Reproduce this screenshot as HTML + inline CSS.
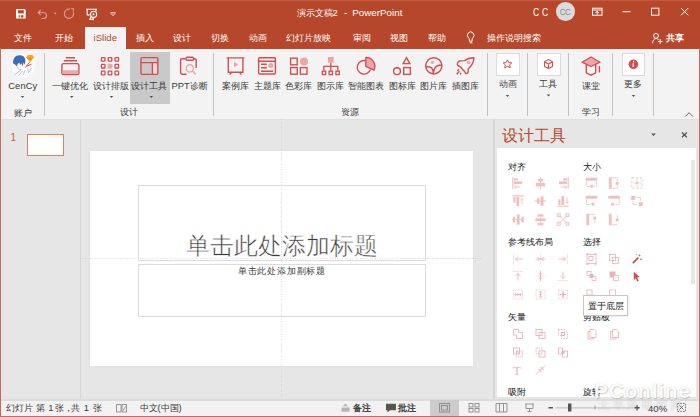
<!DOCTYPE html>
<html><head><meta charset="utf-8">
<style>
*{margin:0;padding:0;box-sizing:border-box}
html,body{width:700px;height:417px;overflow:hidden;background:#E6E6E6;font-family:"Liberation Sans",sans-serif;position:relative}
.a{position:absolute}
.t{position:absolute;white-space:nowrap;line-height:1}
.wt{color:#fff}
.rb{color:#444;font-size:9.5px}
svg{position:absolute;overflow:visible}
</style></head><body>
<!-- title bar + tabs -->
<div class="a" style="left:0;top:0;width:700px;height:49px;background:#B7472A"></div>
<!-- active tab -->
<div class="a" style="left:84.6px;top:27px;width:41px;height:23px;background:#F3F3F3"></div>
<!-- title bar content -->
<div class="a" style="left:0;top:0;width:700px;height:1px;background:#BF5A3F"></div>
<svg style="left:0;top:0" width="120" height="27">
 <path d="M16 8.9h8.6l1.1 1.1v8.6H16z" fill="#fff"/>
 <rect x="17.9" y="10.2" width="5.9" height="3.2" fill="#B7472A"/>
 <rect x="18.6" y="15.2" width="1.2" height="2.4" fill="#B7472A"/><rect x="20.8" y="15.2" width="2.6" height="2.4" fill="#B7472A"/>
 <g fill="none" stroke="#fff" stroke-opacity="0.45" stroke-width="1.2">
  <path d="M38.5 12.5h5a3 3 0 0 1 0 6h-2"/><path d="M40.8 9.8l-2.5 2.7 2.5 2.7"/>
  <path d="M73.2 11.8a4.6 4.6 0 1 1 -3.2 -2.6"/><path d="M71.2 8.4l2.3.6-.5 2.4"/>
 </g>
 <circle cx="55.3" cy="13.3" r="0.9" fill="#fff" fill-opacity="0.5"/>
 <g fill="none" stroke="#fff" stroke-width="1.1">
  <path d="M86 9.3h11M87.2 9.3v5.6h2.4M96 9.3v2"/>
  <path d="M89.3 19.4h4.6M91.6 15.5l-2 3.9M91.6 15.5l2 3.9"/>
 </g>
 <circle cx="93.6" cy="14.3" r="3.1" fill="#B7472A" stroke="#fff" stroke-width="1.1"/>
 <path d="M92.7 12.8l2.2 1.5-2.2 1.5z" fill="#fff"/>
 <path d="M110.5 12.8h5M111 13.6l2 2 2-2" fill="none" stroke="#fff" stroke-width="1" stroke-opacity="0.9"/>
</svg>
<div class="t wt" style="left:296.5px;top:8px;font-size:9.4px;">演示文稿2</div><div class="t wt" style="left:344px;top:8px;font-size:10px;">-</div><div class="t wt" style="left:352.3px;top:8.3px;font-size:9.8px;">PowerPoint</div>
<div class="t wt" style="left:533.2px;top:7.6px;font-size:10.4px;transform:scaleX(.82);transform-origin:0 0">C</div><div class="t wt" style="left:541.9px;top:7.6px;font-size:10.4px;transform:scaleX(.82);transform-origin:0 0">C</div>
<div class="a" style="left:556px;top:2px;width:18.5px;height:18.5px;border-radius:50%;background:#DADBDC"></div>
<div class="t" style="left:559.8px;top:8.5px;font-size:8.2px;color:#8a8a8a;letter-spacing:-0.7px">CC</div>
<svg style="left:580;top:0;left:580px" width="120" height="27">
 <g fill="none" stroke="#fff" stroke-width="1">
  <rect x="12.5" y="8.2" width="9.5" height="7"/>
  <path d="M12.5 10h9.5"/><path d="M17.2 14.4v-3.2M15.5 12.9l1.7-1.7 1.7 1.7"/>
  <path d="M42.5 11.7h8"/>
  <rect x="71.5" y="8.2" width="7.4" height="7"/>
  <path d="M101 8l7.3 7.3M108.3 8l-7.3 7.3"/>
 </g>
</svg>
<!-- tabs -->
<div class="t wt" style="left:13.8px;top:32.5px;font-size:9.4px">文件</div>
<div class="t wt" style="left:55.1px;top:32.5px;font-size:9.4px">开始</div>
<div class="t wt" style="left:135.5px;top:32.5px;font-size:9.4px">插入</div>
<div class="t wt" style="left:173.1px;top:32.5px;font-size:9.4px">设计</div>
<div class="t wt" style="left:211.1px;top:32.5px;font-size:9.4px">切换</div>
<div class="t wt" style="left:248.7px;top:32.5px;font-size:9.4px">动画</div>
<div class="t wt" style="left:286.1px;top:32.5px;font-size:9.4px">幻灯片放映</div>
<div class="t wt" style="left:353.0px;top:32.5px;font-size:9.4px">审阅</div>
<div class="t wt" style="left:390.1px;top:32.5px;font-size:9.4px">视图</div>
<div class="t wt" style="left:427.5px;top:32.5px;font-size:9.4px">帮助</div>
<div class="t wt" style="left:486.7px;top:32.5px;font-size:9.4px">操作说明搜索</div>
<div class="t wt" style="left:666px;top:32.8px;font-size:9.4px;font-weight:bold">共享</div>
<div class="t" style="left:93.5px;top:33px;font-size:9.6px;color:#B7472A">iSlide</div>
<svg style="left:0;top:26px" width="700" height="22">
 <g fill="none" stroke="#fff" stroke-width="1">
  <path d="M469.3 15.2v-1.4c0-1-.3-1.5-.9-2.2a3.3 3.3 0 1 1 4.6 0c-.6.7-.9 1.2-.9 2.2v1.4z"/><path d="M469.8 16.8h2.6"/>
  <circle cx="656" cy="9.8" r="2.4"/><path d="M652.5 17.3c.3-2.8 1.6-4.8 3.5-4.8 1.2 0 2.2.6 2.8 1.6"/><path d="M660.2 13.2v4.6M657.9 15.5h4.6"/>
 </g>
</svg>
<!-- ribbon -->
<div class="a" style="left:0;top:49px;width:700px;height:71px;background:#F3F3F3;border-bottom:1px solid #E0E0E0"></div>
<!-- ribbon content -->
<div class="a" style="left:130px;top:52px;width:39.5px;height:52px;background:#C9C9C9"></div>
<div class="a" style="left:496px;top:53px;width:23.5px;height:22.5px;background:#fff;border:1px solid #DCDCDC"></div>
<div class="a" style="left:536.5px;top:53px;width:24px;height:22.5px;background:#fff;border:1px solid #DCDCDC"></div>
<div class="a" style="left:621.5px;top:53px;width:23.5px;height:22.5px;background:#fff;border:1px solid #DCDCDC"></div>
<svg style="left:0;top:0" width="700" height="120">
 <!-- separators -->
 <g stroke="#C2C2C2" stroke-width="1">
  <path d="M44.5 53v63M213.5 53v63M487.5 53v63M527.5 53v63M568.5 53v63M612.5 53v63M653.5 53v63"/>
 </g>
 <!-- avatar -->
 <circle cx="23.5" cy="65.5" r="12" fill="#FAFAFA"/>
 <path d="M13.2 63.5C12.5 58.5 15.5 55.3 19.5 55.3S25.8 58 25.3 62L24.6 64.8 23.4 62.6 22.8 66.4 21.2 63.2 20 65.2 19.4 62.6 17.6 64 17 66.4 15.1 64.4z" fill="#3D6DB3"/>
 <g fill="none" stroke="#9AA0AE" stroke-width="0.6">
  <path d="M17 66.5c.5 1.8 2 3 4 3.2M21.5 69.5l-7 5.5M22.5 71l-4 4.5M24.8 70.5l-1.5 4.5M27.5 68.5l1.2 4.5M31 68l-1.5 4"/>
 </g>
 <path d="M25.3 67.6l4.3-5.4M27 66l4.5-1.8" stroke="#E0503C" stroke-width="1"/>
 <path d="M26 57.4L28 54.9h4.3L34 57.4 30.1 62.2z" fill="#F6A623"/>
 <path d="M28.4 57.6l1.7 2 1.7-2" fill="none" stroke="#E5602A" stroke-width="0.8"/>
 <!-- 一键优化 -->
 <g fill="none" stroke="#D64D4D" stroke-width="1.4">
  <path d="M65.8 57.7h9.2M63.8 60.8h13.2"/>
  <rect x="61.9" y="63.6" width="17" height="11" rx="1.6"/>
 </g>
 <rect x="62.6" y="70.3" width="15.6" height="3.6" fill="#EDA5A5"/>
 <!-- 设计排版 grid -->
 <g fill="none" stroke="#D64D4D" stroke-width="1.3">
  <rect x="101.4" y="57.6" width="3.6" height="3.6" rx=".6"/><rect x="108.2" y="57.6" width="3.6" height="3.6" rx=".6"/><rect x="115" y="57.6" width="3.6" height="3.6" rx=".6"/>
  <rect x="101.4" y="64.4" width="3.6" height="3.6" rx=".6"/><rect x="115" y="64.4" width="3.6" height="3.6" rx=".6"/>
  <rect x="101.4" y="71.2" width="3.6" height="3.6" rx=".6"/><rect x="108.2" y="71.2" width="3.6" height="3.6" rx=".6"/><rect x="115" y="71.2" width="3.6" height="3.6" rx=".6"/>
 </g>
 <rect x="107.6" y="63.8" width="4.8" height="4.8" fill="#EDA5A5"/>
 <!-- 设计工具 -->
 <rect x="152.6" y="63" width="5" height="11.2" fill="#F6D6D6"/>
 <g fill="none" stroke="#D64D4D" stroke-width="1.4">
  <rect x="141" y="57.6" width="16.8" height="16.8" rx="1.2"/>
  <path d="M141 62.6h16.8M152.4 62.6v11.8"/>
 </g>
 <!-- PPT诊断 -->
 <g fill="none" stroke="#D64D4D" stroke-width="1.4">
  <path d="M185.6 58.8h-3.6c-.8 0-1.4.6-1.4 1.4v12.6c0 .8.6 1.4 1.4 1.4h4.5M194 58.8h.8c.8 0 1.4.6 1.4 1.4v7.8"/>
  <rect x="186" y="57.2" width="7.6" height="3" rx="1.2"/>
 </g>
 <g fill="none" stroke="#EDA5A5" stroke-width="1.4">
  <circle cx="189.8" cy="68.4" r="3.6"/><path d="M192.4 71l3.4 3.4"/>
 </g>
 <!-- 案例库 -->
 <g fill="none" stroke="#D64D4D" stroke-width="1.4">
  <path d="M226.6 57.9h17.8M228.3 58v14.3h14.6V58M231.5 72.3l-1.8 2.4M239.6 72.3l1.8 2.4"/>
 </g>
 <path d="M234 61.8l4.2 2.7-4.2 2.7z" fill="#EDA5A5"/>
 <!-- 主题库 -->
 <g fill="none" stroke="#D64D4D" stroke-width="1.4">
  <rect x="258.6" y="57.8" width="16.8" height="16.2" rx="1"/>
  <path d="M258.6 61.3h16.8M261 64.2h5.8M261 67.8h5.8M261 71.2h12"/>
 </g>
 <circle cx="270.8" cy="65.6" r="2.5" fill="#EDA5A5"/>
 <!-- 色彩库 -->
 <g fill="none" stroke="#D64D4D" stroke-width="1.4">
  <rect x="290.6" y="58.2" width="6.6" height="6.6"/><rect x="290.6" y="67.6" width="6.6" height="6.6"/><rect x="300.4" y="67.6" width="6.6" height="6.6"/>
 </g>
 <circle cx="304" cy="61.4" r="4" fill="#EDA5A5"/>
 <!-- 图示库 -->
 <rect x="327.9" y="57" width="5.7" height="5.7" fill="#EDA5A5"/>
 <g fill="none" stroke="#D64D4D" stroke-width="1.3">
  <path d="M330.8 62.7v3.6M323.8 70.8v-4.5h14v4.5M330.8 66.3v4.5"/>
  <rect x="322.3" y="71.2" width="3.4" height="3.4"/><rect x="329.1" y="71.2" width="3.4" height="3.4"/><rect x="335.9" y="71.2" width="3.4" height="3.4"/>
 </g>
 <!-- 智能图表 -->
 <path d="M365.8 60.7A6.8 6.8 0 1 0 370.5 69.6" fill="none" stroke="#D64D4D" stroke-width="1.4"/>
 <path d="M365.8 57.4V66.4L374 70.2A9 9 0 0 0 365.8 57.4z" fill="#EDA5A5" stroke="#D64D4D" stroke-width="1.3" stroke-linejoin="round"/>
 <!-- 图标库 -->
 <g fill="none" stroke="#D64D4D" stroke-width="1.4">
  <path d="M406.5 57.6l3.3 6h-6.6z"/>
  <circle cx="397" cy="71.2" r="3.4"/>
  <rect x="403.7" y="67.6" width="6.7" height="6.8"/>
 </g>
 <!-- 图片库 -->
 <g fill="none" stroke="#D64D4D" stroke-width="1.5">
  <circle cx="433.8" cy="65.8" r="8.1"/>
  <path d="M425.9 67C431.5 65.5 433.3 69 433.3 73.8M441.6 65.1C435.5 65 433.3 69 433.3 73.8"/>
 </g>
 <circle cx="432.4" cy="62.3" r="1.6" fill="#EDA5A5"/>
 <!-- 插图库 -->
 <g fill="none" stroke="#D64D4D" stroke-width="1.4" stroke-linejoin="round">
  <path d="M473.9 57.8C470 57.8 466.8 59 464.6 60.6L460.6 60.9C458.7 61.1 457.5 62.6 457.4 64L457.7 65.4 461 67.3C461.8 68.8 463 70.3 464.6 71.3L465.5 73.5C467 73.7 468 73 468.2 72L468.3 68.8C471.6 66 473.8 62.2 473.9 57.8z"/>
  <path d="M457.2 70.7l1.8-1.2M456.6 74.2l2.9-2.9M460 74.2l1.3-1.3"/>
 </g>
 <circle cx="468.7" cy="62.5" r="1.8" fill="#EDA5A5"/>
 <!-- star -->
 <path d="M507.5 59.8l1.3 2.8 3 .3-2.2 2 .7 3-2.8-1.6-2.8 1.6.7-3-2.2-2 3-.3z" fill="none" stroke="#D64D4D" stroke-width="1"/>
 <!-- cube -->
 <g fill="none" stroke="#D64D4D" stroke-width="1.1">
  <path d="M548.5 59.6l4 2.2v4.6l-4 2.2-4-2.2v-4.6z M544.5 61.8l4 2.2 4-2.2M548.5 64v4.6"/>
 </g>
 <!-- cap -->
 <path d="M591 57l9 5.2-9 4.3-9-4.3z" fill="#EDA5A5" stroke="#D64D4D" stroke-width="1.3" stroke-linejoin="round"/>
 <g fill="none" stroke="#D64D4D" stroke-width="1.4">
  <path d="M586.3 64.6v8.2l4.7 2.3 4.7-2.3v-8.2M599.4 66v6.4"/>
 </g>
 <!-- info -->
 <circle cx="633.4" cy="64.3" r="4.8" fill="#D64D4D"/>
 <path d="M633.3 63.3v3.6" stroke="#fff" stroke-width="1.4"/><circle cx="633.6" cy="61.6" r=".8" fill="#fff"/>
 <!-- dropdown arrows -->
 <g fill="#555">
  <path d="M20.7 96h3.6l-1.8 1.9z"/>
  <path d="M69.9 96h3.6l-1.8 1.9z"/>
  <path d="M109.7 96h3.6l-1.8 1.9z"/>
  <path d="M149.5 96h3.6l-1.8 1.9z"/>
  <path d="M505.7 95h3.6l-1.8 1.9z"/>
  <path d="M546.7 94.5h3.6l-1.8 1.9z"/>
  <path d="M631.7 95h3.6l-1.8 1.9z"/>
 </g>
 <path d="M685.3 116.5l3.8-3.8 3.8 3.8" fill="none" stroke="#666" stroke-width="1"/>
</svg>
<div class="t" style="left:8.3px;top:82px;font-size:9.3px;color:#3a3a3a;letter-spacing:0.1px">CenCy</div>
<div class="t" style="left:13.6px;top:107.5px;font-size:9.4px;color:#3a3a3a">账户</div>
<div class="t" style="left:51.9px;top:81px;font-size:9.4px;color:#3a3a3a">一键优化</div>
<div class="t" style="left:92.5px;top:81px;font-size:9.4px;color:#3a3a3a">设计排版</div>
<div class="t" style="left:131.1px;top:81px;font-size:9.4px;color:#3a3a3a">设计工具</div>
<div class="t" style="left:171.5px;top:81px;font-size:9.4px;color:#3a3a3a">PPT诊断</div>
<div class="t" style="left:120.4px;top:107.3px;font-size:9.4px;color:#3a3a3a">设计</div>
<div class="t" style="left:221.8px;top:81px;font-size:9.4px;color:#3a3a3a">案例库</div>
<div class="t" style="left:253.8px;top:81px;font-size:9.4px;color:#3a3a3a">主题库</div>
<div class="t" style="left:285.3px;top:81px;font-size:9.4px;color:#3a3a3a">色彩库</div>
<div class="t" style="left:317.3px;top:81px;font-size:9.4px;color:#3a3a3a">图示库</div>
<div class="t" style="left:348.1px;top:81px;font-size:9.4px;color:#3a3a3a">智能图表</div>
<div class="t" style="left:389.1px;top:81px;font-size:9.4px;color:#3a3a3a">图标库</div>
<div class="t" style="left:420.3px;top:81px;font-size:9.4px;color:#3a3a3a">图片库</div>
<div class="t" style="left:452.1px;top:81px;font-size:9.4px;color:#3a3a3a">插图库</div>
<div class="t" style="left:341.1px;top:107.3px;font-size:9.4px;color:#3a3a3a">资源</div>
<div class="t" style="left:498.7px;top:78.8px;font-size:9.4px;color:#3a3a3a">动画</div>
<div class="t" style="left:539.4px;top:79.2px;font-size:9.4px;color:#3a3a3a">工具</div>
<div class="t" style="left:582.1px;top:80.5px;font-size:9.4px;color:#3a3a3a">课堂</div>
<div class="t" style="left:582.1px;top:107.3px;font-size:9.4px;color:#3a3a3a">学习</div>
<div class="t" style="left:624.3px;top:78.8px;font-size:9.4px;color:#3a3a3a">更多</div>
<!-- thumbnails panel -->
<div class="a" style="left:80px;top:119px;width:1px;height:280px;background:#D8D8D8"></div>
<div class="t" style="left:10.5px;top:133.2px;font-size:10px;color:#CC5A40">1</div>
<div class="a" style="left:27px;top:133.6px;width:37px;height:22px;background:#fff;border:1.7px solid #EC7A58"></div>
<!-- slide -->
<div class="a" style="left:90px;top:151px;width:382.5px;height:215px;background:#fff;box-shadow:0 0 2px rgba(0,0,0,.06)"></div>
<div class="a" style="left:137.5px;top:185px;width:288px;height:76px;border:1px solid #DCDCDC"></div>
<div class="a" style="left:137.5px;top:263.5px;width:288px;height:53px;border:1px solid #DCDCDC"></div>
<div class="t" style="left:186px;top:234px;font-size:23.8px;color:#3a3a3a;font-weight:300;-webkit-text-stroke:0.5px #fff">单击此处添加标题</div>
<div class="t" style="left:237.8px;top:266.5px;font-size:9.1px;letter-spacing:0.8px;color:#3a3a3a">单击此处添加副标题</div>
<!-- guides -->
<div class="a" style="left:281px;top:119px;width:1px;height:280px;background:repeating-linear-gradient(180deg,#C8C8C8 0 1px,transparent 1px 2.5px);opacity:.6"></div>
<div class="a" style="left:80px;top:258px;width:402px;height:1px;background:repeating-linear-gradient(90deg,#C8C8C8 0 1px,transparent 1px 2.5px);opacity:.6"></div>
<!-- pane -->
<div class="a" style="left:493px;top:119px;width:2px;height:280px;background:#D6D6D6"></div>
<div class="a" style="left:497px;top:148px;width:199px;height:249px;background:#fff"></div>
<div class="a" style="left:691px;top:160px;width:3.5px;height:124px;background:#E6E6E6"></div>
<div class="t" style="left:501.5px;top:126.5px;font-size:16.2px;color:#B7472A">设计工具</div>
<svg style="left:0;top:0" width="700" height="417">
 <path d="M651.1 133.6h4.8l-2.4 2.4z" fill="#555"/>
 <path d="M682 132.5l4.8 4.8M686.8 132.5l-4.8 4.8" stroke="#555" stroke-width="1.3"/>
</svg>
<!-- pane content -->
<svg style="left:0;top:0" width="700" height="417">
<g transform="translate(512.25,177.25) scale(1.15)" opacity=".82"><path d="M0.5 0v10" stroke="#EDB3B3"/><rect x="1.5" y="1" width="3.5" height="1.8" fill="#EDB3B3"/><rect x="1.5" y="3.6" width="7" height="2.4" fill="#EDB3B3"/><path d="M2 8.5h5M3.5 7l-1.5 1.5 1.5 1.5" stroke="#EDB3B3" fill="none" stroke-width=".8"/></g>
<g transform="translate(534.75,177.25) scale(1.15)" opacity=".82"><path d="M5 0v10" stroke="#EDB3B3"/><rect x="3" y="1.5" width="4" height="2.2" fill="#EDB3B3"/><rect x="1" y="5" width="8" height="3" fill="#EDB3B3"/></g>
<g transform="translate(557.25,177.25) scale(1.15)" opacity=".82"><path d="M9.5 0v10" stroke="#EDB3B3"/><rect x="5" y="1" width="3.5" height="1.8" fill="#EDB3B3"/><rect x="1.5" y="3.6" width="7" height="2.4" fill="#EDB3B3"/><path d="M3 8.5h5M6.5 7l1.5 1.5-1.5 1.5" stroke="#EDB3B3" fill="none" stroke-width=".8"/></g>
<g transform="translate(512.25,195.25) scale(1.15)" opacity=".82"><path d="M0 0.5h10" stroke="#EDB3B3"/><rect x="1" y="1.5" width="1.8" height="5" fill="#EDB3B3"/><rect x="3.6" y="1.5" width="2.4" height="8" fill="#EDB3B3"/><path d="M8.5 8V3M7 4.5l1.5-1.5 1.5 1.5" stroke="#EDB3B3" fill="none" stroke-width=".8"/></g>
<g transform="translate(534.75,195.25) scale(1.15)" opacity=".82"><path d="M0 5h10" stroke="#EDB3B3"/><rect x="2" y="2.5" width="2" height="5" fill="#EDB3B3"/><rect x="5" y="1" width="2.6" height="8" fill="#EDB3B3"/></g>
<g transform="translate(557.25,195.25) scale(1.15)" opacity=".82"><path d="M0 9.5h10" stroke="#EDB3B3"/><rect x="1" y="3.5" width="1.8" height="5" fill="#EDB3B3"/><rect x="3.6" y="0.5" width="2.4" height="8" fill="#EDB3B3"/><path d="M8.5 2v5M7 5.5l1.5 1.5 1.5-1.5" stroke="#EDB3B3" fill="none" stroke-width=".8"/></g>
<g transform="translate(512.25,213.75) scale(1.15)" opacity=".82"><rect x="0.5" y="2.5" width="2" height="5" fill="#EDB3B3"/><rect x="4" y="0.5" width="2.4" height="9" fill="#EDB3B3"/><rect x="8" y="2.5" width="2" height="5" fill="#EDB3B3"/><path d="M0 5h10" stroke="#EDB3B3" stroke-width=".6"/></g>
<g transform="translate(534.75,213.75) scale(1.15)" opacity=".82"><rect x="2.5" y="0.5" width="5" height="2" fill="#EDB3B3"/><rect x="0.5" y="4" width="9" height="2.4" fill="#EDB3B3"/><rect x="2.5" y="8" width="5" height="2" fill="#EDB3B3"/><path d="M5 0v10" stroke="#EDB3B3" stroke-width=".6"/></g>
<g transform="translate(557.25,213.75) scale(1.15)" opacity=".82"><path d="M1.5 1.5l7 7M8.5 1.5l-7 7" stroke="#EDB3B3" stroke-width=".8"/><g fill="none" stroke="#EDB3B3" stroke-width=".8"><rect x="0" y="0" width="2.5" height="2.5"/><rect x="7.5" y="0" width="2.5" height="2.5"/><rect x="0" y="7.5" width="2.5" height="2.5"/><rect x="7.5" y="7.5" width="2.5" height="2.5"/></g></g>
<g transform="translate(585.75,177.25) scale(1.15)" opacity=".82"><rect x="0" y="0.5" width="10" height="2.5" fill="#EDB3B3"/><path d="M0.5 3v5M9.5 3v5" stroke="#EDB3B3" stroke-width=".7"/><rect x="4" y="6.5" width="2.5" height="2.5" fill="#EDB3B3"/><path d="M1 8h2.5M7 8h2" stroke="#EDB3B3" stroke-width=".7"/></g>
<g transform="translate(608.25,177.25) scale(1.15)" opacity=".82"><rect x="0.5" y="0" width="2.5" height="10" fill="#EDB3B3"/><path d="M3 0.5h5M3 9.5h5" stroke="#EDB3B3" stroke-width=".7"/><rect x="6.5" y="4" width="2.5" height="2.5" fill="#EDB3B3"/><path d="M8 1v2.5M8 7v2" stroke="#EDB3B3" stroke-width=".7"/></g>
<g transform="translate(631.25,177.25) scale(1.15)" opacity=".82"><rect x="0.5" y="0.5" width="9" height="9" fill="none" stroke="#EDB3B3" stroke-width=".8" stroke-dasharray="2 1.5"/><rect x="3.8" y="3.8" width="2.4" height="2.4" fill="#EDB3B3"/><path d="M5 1.5v1.5M5 7v1.5M1.5 5h1.5M7 5h1.5" stroke="#EDB3B3" stroke-width=".7"/></g>
<g transform="translate(585.75,195.25) scale(1.15)" opacity=".82"><rect x="0" y="0.5" width="10" height="2.5" fill="#EDB3B3"/><path d="M0.5 3v5" stroke="#EDB3B3" stroke-width=".7"/><rect x="5" y="6.5" width="2.5" height="2.5" fill="#EDB3B3"/><path d="M1 8h3" stroke="#EDB3B3" stroke-width=".7"/></g>
<g transform="translate(608.25,195.25) scale(1.15)" opacity=".82"><rect x="0" y="0.5" width="10" height="2.5" fill="#EDB3B3"/><path d="M9.5 3v5" stroke="#EDB3B3" stroke-width=".7"/><rect x="2.5" y="6.5" width="2.5" height="2.5" fill="#EDB3B3"/><path d="M6 8h3" stroke="#EDB3B3" stroke-width=".7"/></g>
<g transform="translate(631.25,195.25) scale(1.15)" opacity=".82"><rect x="0" y="0.5" width="3.5" height="3.5" fill="#EDB3B3"/><rect x="6.5" y="6" width="3.5" height="3.5" fill="#EDB3B3"/><path d="M4.5 2h3.5v3M1.5 5v3h3.5" stroke="#EDB3B3" stroke-width=".7" fill="none"/></g>
<g transform="translate(585.75,213.75) scale(1.15)" opacity=".82"><rect x="0.5" y="0" width="2.5" height="10" fill="#EDB3B3"/><path d="M3 0.5h5" stroke="#EDB3B3" stroke-width=".7"/><rect x="6.5" y="2.5" width="2.5" height="2.5" fill="#EDB3B3"/><path d="M8 5.5v3" stroke="#EDB3B3" stroke-width=".7"/></g>
<g transform="translate(608.25,213.75) scale(1.15)" opacity=".82"><rect x="0.5" y="0" width="2.5" height="10" fill="#EDB3B3"/><path d="M3 9.5h5" stroke="#EDB3B3" stroke-width=".7"/><rect x="6.5" y="4" width="2.5" height="2.5" fill="#EDB3B3"/><path d="M8 1v2.5" stroke="#EDB3B3" stroke-width=".7"/></g>
<g transform="translate(513,254)"><path d="M0.5 0v10" stroke="#F2C9C9" stroke-width=".8" stroke-dasharray="1.5 .8"/><path d="M2.5 5h7M5 2.5L2.5 5 5 7.5" stroke="#EDB3B3" fill="none" stroke-width=".9"/></g>
<g transform="translate(535.5,254)"><path d="M5 0v10" stroke="#F2C9C9" stroke-width=".8" stroke-dasharray="1.5 .8"/><path d="M0 5h10M2 3l2 2-2 2M8 3L6 5l2 2" stroke="#EDB3B3" fill="none" stroke-width=".9"/></g>
<g transform="translate(558,254)"><path d="M9.5 0v10" stroke="#F2C9C9" stroke-width=".8" stroke-dasharray="1.5 .8"/><path d="M0.5 5h7M5 2.5L7.5 5 5 7.5" stroke="#EDB3B3" fill="none" stroke-width=".9"/></g>
<g transform="translate(513,271)"><path d="M0 0.5h10" stroke="#F2C9C9" stroke-width=".8" stroke-dasharray="1.5 .8"/><path d="M5 2.5v7M2.5 5L5 2.5 7.5 5" stroke="#EDB3B3" fill="none" stroke-width=".9"/></g>
<g transform="translate(535.5,271)"><path d="M0 5h10" stroke="#F2C9C9" stroke-width=".8" stroke-dasharray="1.5 .8"/><path d="M5 0v10M3 2l2 2 2-2M3 8l2-2 2 2" stroke="#EDB3B3" fill="none" stroke-width=".9"/></g>
<g transform="translate(558,271)"><path d="M0 9.5h10" stroke="#F2C9C9" stroke-width=".8" stroke-dasharray="1.5 .8"/><path d="M5 0.5v7M2.5 5L5 7.5 7.5 5" stroke="#EDB3B3" fill="none" stroke-width=".9"/></g>
<g transform="translate(513,289.5)"><rect x="0.5" y="0.5" width="9" height="9" fill="none" stroke="#F2C9C9" stroke-width=".8" stroke-dasharray="1.5 .8"/><path d="M1.5 5h7M3.2 3.5L1.7 5l1.5 1.5M6.8 3.5L8.3 5 6.8 6.5" stroke="#EDB3B3" fill="none" stroke-width=".9"/><circle cx="5" cy="5" r="1" fill="#EDB3B3"/></g>
<g transform="translate(535.5,289.5)"><rect x="0.5" y="0.5" width="9" height="9" fill="none" stroke="#F2C9C9" stroke-width=".8" stroke-dasharray="1.5 .8"/><path d="M5 1.5v7M3.5 3.2L5 1.7l1.5 1.5M3.5 6.8L5 8.3l1.5-1.5" stroke="#EDB3B3" fill="none" stroke-width=".9"/><circle cx="5" cy="5" r="1" fill="#EDB3B3"/></g>
<g transform="translate(558,289.5)"><rect x="0.5" y="0.5" width="9" height="9" fill="none" stroke="#F2C9C9" stroke-width=".8" stroke-dasharray="1.5 .8"/><path d="M1.5 5h7M5 1.5v7" stroke="#EDB3B3" fill="none" stroke-width=".9"/><circle cx="5" cy="5" r="1.3" fill="#EDB3B3"/><circle cx="2.5" cy="5" r=".8" fill="#EDB3B3"/><circle cx="7.5" cy="5" r=".8" fill="#EDB3B3"/><circle cx="5" cy="2.5" r=".8" fill="#EDB3B3"/><circle cx="5" cy="7.5" r=".8" fill="#EDB3B3"/></g>
<g transform="translate(586.5,254)"><rect x="0.5" y="0.5" width="9" height="9" fill="none" stroke="#EDB3B3" stroke-width=".8"/><rect x="2.5" y="2.5" width="4" height="4" fill="none" stroke="#EDB3B3" stroke-width=".8"/><path d="M0 0h2M8 0h2M0 10h2M8 10h2" stroke="#EDB3B3" stroke-width="1.5"/></g>
<g transform="translate(609,254)"><rect x="0.5" y="0.5" width="6" height="6" fill="none" stroke="#EDB3B3" stroke-width=".8"/><rect x="3.5" y="3.5" width="6" height="6" fill="none" stroke="#EDB3B3" stroke-width=".8"/></g>
<g transform="translate(632,254)"><path d="M0.8 9.2l5.5-5.5" stroke="#D64D4D" stroke-width="1.8"/><path d="M7.5 0.5v2M6.5 1.5h2M9 4.5v1.5M8.2 5.2h1.6M4.5 0v1" stroke="#D64D4D" stroke-width=".7"/></g>
<g transform="translate(586.5,271)"><rect x="0.5" y="0.5" width="4" height="4" fill="none" stroke="#EDB3B3" stroke-width=".8"/><rect x="3" y="3" width="4" height="4" fill="#EDB3B3"/><rect x="5.5" y="5.5" width="4" height="4" fill="none" stroke="#EDB3B3" stroke-width=".8"/></g>
<g transform="translate(609,271)"><rect x="0.5" y="0.5" width="6" height="6" fill="#EDB3B3"/><rect x="4.5" y="4.5" width="5" height="5" fill="#fff" stroke="#EDB3B3" stroke-width=".8"/></g>
<path d="M633.8 271.8l6 5.2-2.6.4 1.6 3.4-1.4.8-1.6-3.4-2 2z" fill="#D64D4D"/>
<g transform="translate(586.5,289.5)"><rect x="0.5" y="0.5" width="5" height="5" fill="none" stroke="#EDB3B3" stroke-width=".8"/><rect x="6" y="5" width="2" height="2" fill="#EDB3B3"/></g>
<g transform="translate(609,289.5)"><rect x="0.5" y="0.5" width="6" height="6" fill="none" stroke="#EDB3B3" stroke-width=".8"/></g>
<g transform="translate(513,329)"><path d="M0.5 0.5h5v3h4v6h-6v-3.5h-3z" fill="none" stroke="#EDB3B3" stroke-width=".9"/></g>
<g transform="translate(535.5,329)"><rect x="0.5" y="0.5" width="6" height="6" fill="none" stroke="#EDB3B3" stroke-width=".9"/><rect x="3.5" y="3.5" width="6" height="6" fill="none" stroke="#EDB3B3" stroke-width=".9"/></g>
<g transform="translate(558,329)"><rect x="0.5" y="0.5" width="6" height="6" fill="none" stroke="#EDB3B3" stroke-width=".9" stroke-dasharray="1.5 1"/><rect x="3.5" y="3.5" width="6" height="6" fill="none" stroke="#EDB3B3" stroke-width=".9" stroke-dasharray="1.5 1"/><rect x="3.5" y="3.5" width="3" height="3" fill="none" stroke="#EDB3B3" stroke-width=".9"/></g>
<g transform="translate(513,347.5)"><rect x="0.5" y="0.5" width="6" height="6" fill="none" stroke="#EDB3B3" stroke-width=".9"/><rect x="3.5" y="3.5" width="6" height="6" fill="none" stroke="#EDB3B3" stroke-width=".9" stroke-dasharray="1.5 1"/><rect x="3" y="3" width="3.5" height="3.5" fill="#EDB3B3" fill-opacity=".5"/></g>
<g transform="translate(535.5,347.5)"><rect x="0.5" y="0.5" width="6" height="6" fill="none" stroke="#EDB3B3" stroke-width=".9" stroke-dasharray="1.5 1"/><rect x="3.5" y="3.5" width="6" height="6" fill="none" stroke="#EDB3B3" stroke-width=".9"/></g>
<g transform="translate(558,347.5)"><path d="M0.5 0.5h4v3h5v6h-5v-3h-4z" fill="none" stroke="#EDB3B3" stroke-width=".9"/><path d="M3.5 3.5h3v3h-3z" fill="#EDB3B3"/></g>
<text x="513" y="375" font-family="Liberation Serif" font-size="13" fill="#EDB3B3">T</text>
<g transform="translate(535.5,365)"><path d="M0.5 9.5l9-9M3 4.5c1.5 0 3 1.5 2.5 3M5 2.5c1.5 0 3 1.5 2.5 3" stroke="#EDB3B3" fill="none" stroke-width="1"/></g>
<g transform="translate(586.5,329)"><path d="M3.5 0.5h4l2 2v6h-6z" fill="none" stroke="#EDB3B3" stroke-width=".9"/><path d="M3.5 2.5h-2v7.5h5.5v-1.5" fill="none" stroke="#EDB3B3" stroke-width=".9"/></g>
<g transform="translate(609,329)"><path d="M3.5 0.5h4l2 2v6h-6z" fill="none" stroke="#EDB3B3" stroke-width=".9"/><path d="M3.5 2.5h-2v7.5h5.5v-1.5" fill="none" stroke="#EDB3B3" stroke-width=".9"/></g>
</svg>
<div class="t" style="left:508.0px;top:161.5px;font-size:9.4px;color:#222">对齐</div>
<div class="t" style="left:582.5px;top:161.5px;font-size:9.4px;color:#222">大小</div>
<div class="t" style="left:508.0px;top:236.5px;font-size:9.4px;color:#222">参考线布局</div>
<div class="t" style="left:582.5px;top:236.5px;font-size:9.4px;color:#222">选择</div>
<div class="t" style="left:508.0px;top:312px;font-size:9.4px;color:#222">矢量</div>
<div class="t" style="left:582.5px;top:312px;font-size:9.4px;color:#222">剪贴板</div>
<div class="t" style="left:508.0px;top:386.5px;font-size:9.4px;color:#222">吸附</div>
<div class="t" style="left:582.5px;top:386.5px;font-size:9.4px;color:#222">旋转</div>
<div class="a" style="left:583.3px;top:295px;width:44.7px;height:20.6px;background:#fff;border:1px solid #C6C6C6;box-shadow:1px 1px 1px rgba(0,0,0,.06)"></div>
<div class="t" style="left:587.5px;top:301px;font-size:9.4px;color:#222">置于底层</div>
<!-- status bar -->
<div class="a" style="left:0;top:399px;width:700px;height:18px;background:#F2F2F2;border-top:2px solid #DCDCDC"></div>
<div class="a" style="left:0;top:416px;width:700px;height:1px;background:#C96A52"></div>
<!-- watermark -->
<div class="t" style="left:594px;top:380px;font-size:21px;font-weight:bold;letter-spacing:0.7px;color:rgba(255,255,255,.97);text-shadow:0 0 1px rgba(0,0,0,.25),1px 1px 1px rgba(0,0,0,.15)">PConline</div>
<div class="t" style="left:598px;top:399.5px;font-size:10.5px;letter-spacing:3.6px;color:rgba(255,255,255,.85);text-shadow:0 0 1px rgba(0,0,0,.3)">太平洋电脑网</div>
<!-- status content -->
<div class="a" style="left:430px;top:400px;width:28.5px;height:16px;background:#CBCBCB"></div>
<div class="t" style="left:6.3px;top:403.3px;font-size:9.4px;color:#3a3a3a">幻灯片</div><div class="t" style="left:36.2px;top:403.3px;font-size:9.4px;color:#3a3a3a">第</div><div class="t" style="left:48.3px;top:403.3px;font-size:9.4px;color:#3a3a3a">1</div><div class="t" style="left:54.7px;top:403.3px;font-size:9.4px;color:#3a3a3a">张</div><div class="t" style="left:64px;top:403.3px;font-size:9.4px;color:#3a3a3a">，</div><div class="t" style="left:70.5px;top:403.3px;font-size:9.4px;color:#3a3a3a">共</div><div class="t" style="left:83.7px;top:403.3px;font-size:9.4px;color:#3a3a3a">1</div><div class="t" style="left:92.5px;top:403.3px;font-size:9.4px;color:#3a3a3a">张</div>
<div class="t" style="left:139.5px;top:403.3px;font-size:9.4px;color:#3a3a3a">中文(中国)</div>
<div class="t" style="left:352.5px;top:403px;font-size:9.4px;color:#404040;font-weight:bold">备注</div>
<div class="t" style="left:398px;top:403px;font-size:9.4px;color:#404040;font-weight:bold">批注</div>
<div class="t" style="left:648px;top:403.5px;font-size:9.6px;color:#444">40%</div>
<svg style="left:0;top:0" width="700" height="417">
 <g fill="none" stroke="#8a8a8a" stroke-width=".9">
  <path d="M116.5 404.5h4.5v7.5h-4.5z"/><path d="M122 404.5h4.5v7.5h-4.5zM123 410.5l2.5-4"/>
 </g>
 <path d="M341.5 411.7h8v-4.2h-8z" fill="#B4B4B4"/><path d="M343.5 406.3l2-2 2 2" fill="none" stroke="#B4B4B4" stroke-width="1.1"/>
 <path d="M386 403.8h10v6.4h-6l-2.6 2.4v-2.4H386z" fill="#555"/>
 <g fill="none" stroke="#8a8a8a" stroke-width=".9">
  <rect x="439.5" y="403.5" width="10" height="8.5"/><rect x="441.5" y="405.5" width="6" height="4.5"/>
  <rect x="469" y="403.5" width="4" height="3.5"/><rect x="475" y="403.5" width="4" height="3.5"/><rect x="469" y="408.5" width="4" height="3.5"/><rect x="475" y="408.5" width="4" height="3.5"/>
  <path d="M496 403.5h11v8.5h-11zM499.5 403.5v8.5M503.5 403.5v8.5"/>
  <path d="M525 404h9M526 404v4.5h7V404M529.5 408.5v3M527.5 411.5h4"/>
 </g>
 <path d="M548.5 407.8h4.5M634.5 407.8h5.2M637.1 405.2v5.2" stroke="#555" stroke-width="1.4"/>
 <path d="M555.5 407.8h78" stroke="#C4C4C4" stroke-width="1.3"/>
 <path d="M595 405.5v4" stroke="#888" stroke-width=".8"/>
 <rect x="568" y="403.5" width="3.4" height="8" fill="#555"/>
 <g fill="none" stroke="#6a6a6a" stroke-width=".9">
  <rect x="677.5" y="403.5" width="8" height="8" stroke-dasharray="1.6 1.2"/>
  <path d="M679.5 405.5l4 4M683.5 405.5l-4 4"/>
 </g>
</svg>
<!-- window borders -->
<div class="a" style="left:0;top:48px;width:1px;height:369px;background:#C96A52"></div>
<div class="a" style="left:699px;top:48px;width:1px;height:369px;background:#C96A52"></div>
</body></html>
